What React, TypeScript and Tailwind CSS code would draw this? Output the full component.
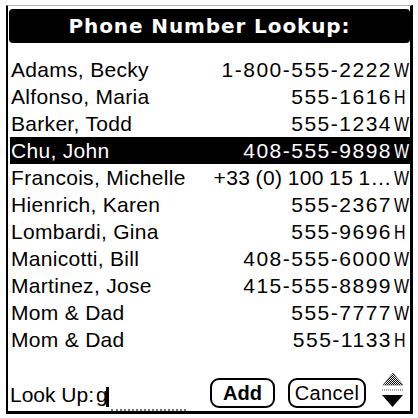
const contacts = [
  { name: "Adams, Becky", phone: "1-800-555-2222", kind: "W" },
  { name: "Alfonso, Maria", phone: "555-1616", kind: "H" },
  { name: "Barker, Todd", phone: "555-1234", kind: "W" },
  { name: "Chu, John", phone: "408-555-9898", kind: "W", selected: true },
  { name: "Francois, Michelle", phone: "+33 (0) 100 15 1…", kind: "W", tight: true },
  { name: "Hienrich, Karen", phone: "555-2367", kind: "W" },
  { name: "Lombardi, Gina", phone: "555-9696", kind: "H" },
  { name: "Manicotti, Bill", phone: "408-555-6000", kind: "W" },
  { name: "Martinez, Jose", phone: "415-555-8899", kind: "W" },
  { name: "Mom & Dad", phone: "555-7777", kind: "W" },
  { name: "Mom & Dad", phone: "555-1133", kind: "H" },
];

function ScrollArrows() {
  return (
    <svg width="24" height="36" viewBox="0 0 24 36" className="block">
      <defs>
        <pattern id="dither" width="2" height="2" patternUnits="userSpaceOnUse">
          <rect width="1" height="1" fill="#000" />
          <rect x="1" y="1" width="1" height="1" fill="#000" />
        </pattern>
      </defs>
      <polygon points="12,1 22,13 2,13" fill="url(#dither)" stroke="#666" strokeWidth="0.8" />
      <line x1="1" y1="18" x2="23" y2="18" stroke="#888" strokeWidth="1.5" strokeDasharray="1 1" />
      <polygon points="1,23 22,23 11.5,35" fill="#000" />
    </svg>
  );
}

export default function App() {
  return (
    <div
      className="w-[418px] h-[418px] overflow-hidden bg-white text-black"
      style={{ fontFamily: '"Liberation Sans", Arial, sans-serif' }}
    >
      <div className="ml-[6px] mt-[5px] flex h-[409px] w-[407px] flex-col border-t border-l-[2px] border-r-[3px] border-b-[3px] border-black border-t-[#b5b5b5]">
        {/* title bar */}
        <div className="ml-[1px] mt-[3px] flex h-[34px] items-center justify-center rounded-[4px] bg-black text-[20px] font-bold tracking-[0.9px] text-white [font-family:'DejaVu_Sans',sans-serif]">
          Phone Number Lookup:
        </div>

        {/* list */}
        <div className="ml-[2px] mt-[13px] flex flex-col">
          {contacts.map((c, i) => (
            <div
              key={i}
              className={`flex h-[27px] items-center text-[21px] leading-[27px] ${
                c.selected ? "bg-black text-white" : ""
              }`}
            >
              <span className="flex-1 whitespace-nowrap pl-[1px] tracking-[0.3px]">{c.name}</span>
              <span
                className={`whitespace-nowrap ${
                  c.tight ? "tracking-[0.4px] [word-spacing:-1px]" : "tracking-[1.5px]"
                }`}
              >
                {c.phone}
              </span>
              <span className="w-[18px] shrink-0 pl-[2px]">
                <span className="inline-block origin-left scale-x-[0.76]">{c.kind}</span>
              </span>
            </div>
          ))}
        </div>

        {/* bottom bar */}
        <div className="mt-auto flex h-[39px] items-end">
          <div className="flex w-[202px] items-end">
            <span className="mb-[3px] pl-[2px] text-[21px] leading-[27px] whitespace-nowrap">
              Look Up:
            </span>
            <span className="mb-[3px] ml-[2px] text-[21px] leading-[27px]">g</span>
            <span className="mb-[4px] -ml-[2px] h-[20px] w-[3px] bg-black" />
            <span className="ml-[2px] h-[2px] w-[75px] border-b-2 border-dotted border-[#777]" />
          </div>
          <button className="mb-[3px] flex h-[30px] w-[65px] items-center justify-center rounded-[9px] border-2 border-black text-[20px] font-bold leading-none">
            Add
          </button>
          <button className="mb-[3px] ml-[13px] flex h-[30px] w-[78px] items-center justify-center rounded-[9px] border-2 border-black text-[20px] leading-none tracking-[0.4px]">
            Cancel
          </button>
          <div className="mb-[3px] ml-[15px]">
            <ScrollArrows />
          </div>
        </div>
      </div>
    </div>
  );
}
